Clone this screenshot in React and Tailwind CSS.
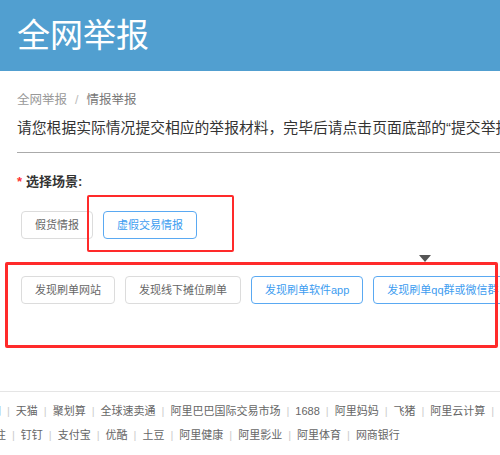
import React from 'react';

const row1 = ['淘宝网', '天猫', '聚划算', '全球速卖通', '阿里巴巴国际交易市场', '1688', '阿里妈妈', '飞猪', '阿里云计算', 'AliOS'];
const row2 = ['来往', '钉钉', '支付宝', '优酷', '土豆', '阿里健康', '阿里影业', '阿里体育', '网商银行'];

const FooterRow = ({ items, offset }) => (
  <div className={`flex whitespace-nowrap text-[11px] leading-4 text-[#666] ${offset}`}>
    {items.map((item, i) => (
      <span key={item} className="flex items-center">
        {i > 0 && <span className="mx-[6px] text-[#ccc]">|</span>}
        {item}
      </span>
    ))}
  </div>
);

const Button = ({ children, active }) => (
  <button
    className={`h-[28px] shrink-0 whitespace-nowrap rounded-[4px] border px-[13px] text-[11px] ${
      active ? 'border-[#5aa9f2] text-[#3c9cf0]' : 'border-[#dcdcdc] text-[#666]'
    }`}
  >
    {children}
  </button>
);

export default function App() {
  return (
    <div className="relative h-[455px] w-[500px] overflow-hidden bg-white font-['Liberation_Sans','Noto_Sans_CJK_SC',sans-serif]">
      {/* header */}
      <div className="flex h-[71px] items-center bg-[#519fd0] px-[17px]">
        <h1 className="text-[33px] leading-none text-white">全网举报</h1>
      </div>

      <div className="pl-[17px]">
        <div className="mt-[20px] flex items-center text-[12.5px] leading-[18px]">
          <span className="text-[#999]">全网举报</span>
          <span className="mx-[8px] text-[#bbb]">/</span>
          <span className="text-[#777]">情报举报</span>
        </div>
        <p className="mt-[9px] whitespace-nowrap text-[14.8px] leading-5 text-[#333]">
          请您根据实际情况提交相应的举报材料，完毕后请点击页面底部的“提交举报”按钮
        </p>
        <div className="mt-[14px] h-px bg-[#aaa]" />

        <div className="mt-[20px] flex items-center text-[13px] font-bold leading-[18px] text-[#333]">
          <span className="mr-[4px] text-[#f33]">*</span>
          选择场景:
        </div>

        <div className="ml-[4px] mt-[20px] flex gap-[10px]">
          <Button>假货情报</Button>
          <Button active>虚假交易情报</Button>
        </div>

        <div className="ml-[4px] mt-[37px] flex gap-[10px]">
          <Button>发现刷单网站</Button>
          <Button>发现线下摊位刷单</Button>
          <Button active>发现刷单软件app</Button>
          <Button active>发现刷单qq群或微信群</Button>
        </div>
      </div>

      {/* footer */}
      <div className="mt-[87px] border-t border-[#e5e5e5] pt-[11px]">
        <FooterRow items={row1} offset="ml-[-32px]" />
        <FooterRow items={row2} offset="ml-[-16px] mt-[8px]" />
      </div>

      {/* annotations */}
      <div className="absolute left-[87px] top-[195px] h-[57px] w-[147px] rounded-[2px] border-2 border-[#ff2a2a]" />
      <div className="absolute left-[5px] top-[262px] h-[86px] w-[493px] rounded-[2px] border-[3px] border-[#ff2a2a]" />
      <div className="absolute left-[419px] top-[255px] h-0 w-0 border-x-[6.5px] border-t-[7px] border-x-transparent border-t-[#555]" />
    </div>
  );
}
